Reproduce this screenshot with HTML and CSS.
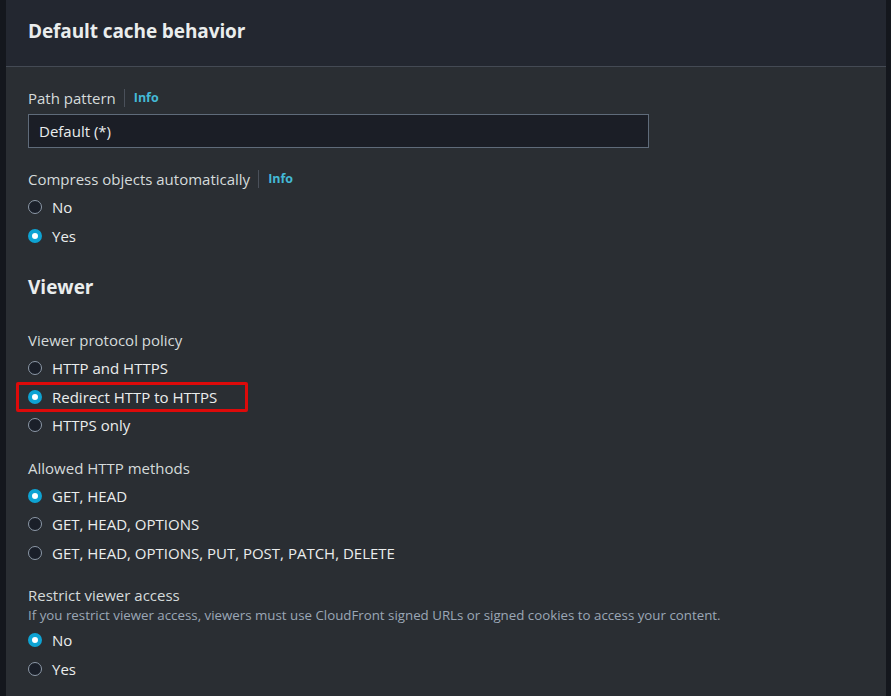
FILE: index.html
```html
<!DOCTYPE html>
<html>
<head>
<meta charset="utf-8">
<link rel="stylesheet" href="styles.css">
</head>
<body>
<div class="panel">
  <div class="panel-header"><h2>Default cache behavior</h2></div>
  <div class="panel-body">
    <div class="field field-input">
      <div class="label">Path pattern <span class="sep"></span><a class="info">Info</a></div>
      <div class="input">Default (*)</div>
    </div>
    <div class="field">
      <div class="label">Compress objects automatically <span class="sep"></span><a class="info">Info</a></div>
      <div class="radios">
        <div class="radio"><span class="dot"></span>No</div>
        <div class="radio"><span class="dot on"></span>Yes</div>
      </div>
    </div>
    <h3>Viewer</h3>
    <div class="field">
      <div class="label">Viewer protocol policy</div>
      <div class="radios">
        <div class="radio"><span class="dot"></span>HTTP and HTTPS</div>
        <div class="radio"><span class="dot on"></span>Redirect HTTP to HTTPS<span class="highlight"></span></div>
        <div class="radio"><span class="dot"></span>HTTPS only</div>
      </div>
    </div>
    <div class="field">
      <div class="label">Allowed HTTP methods</div>
      <div class="radios">
        <div class="radio"><span class="dot on"></span>GET, HEAD</div>
        <div class="radio"><span class="dot"></span>GET, HEAD, OPTIONS</div>
        <div class="radio"><span class="dot"></span>GET, HEAD, OPTIONS, PUT, POST, PATCH, DELETE</div>
      </div>
    </div>
    <div class="field">
      <div class="label">Restrict viewer access</div>
      <div class="desc">If you restrict viewer access, viewers must use CloudFront signed URLs or signed cookies to access your content.</div>
      <div class="radios radios-tight">
        <div class="radio"><span class="dot on"></span>No</div>
        <div class="radio"><span class="dot"></span>Yes</div>
      </div>
    </div>
  </div>
</div>
</body>
</html>
```
FILE: styles.css
```css
html, body { margin: 0; height: 100%; }
body {
  background: #14171d;
  padding: 0 5px 0 6px;
  box-sizing: border-box;
  font-family: "Open Sans", "Noto Sans", sans-serif;
  color: #d5dbdb;
  font-size: 15px;
  overflow: hidden;
}
.panel {
  background: #2a2e33;
  height: 100%;
}
.panel-header {
  background: #232730;
  height: 66px;
  border-bottom: 1px solid #444a54;
  padding: 0 22px;
  display: flex;
  align-items: center;
}
.panel-header h2 {
  margin: 0 0 5px;
  font-size: 19px;
  font-weight: 700;
  color: #eaeded;
  letter-spacing: -0.1px;
}
.panel-body {
  padding: 20px 22px 0;
}
.field { margin-bottom: 17px; }
.field-input { margin-bottom: 20px; }
.label {
  display: flex;
  align-items: center;
  height: 22px;
  color: #d5dbdb;
  line-height: 22px;
}
.sep {
  display: inline-block;
  width: 1px;
  height: 18px;
  background: #4a505a;
  margin: 0 9px 0 8px;
}
.info {
  color: #44b9d6;
  font-weight: 700;
  font-size: 12.5px;
}
.input {
  margin-top: 5px;
  width: 621px;
  height: 34px;
  box-sizing: border-box;
  border: 1px solid #5f6b7a;
  background: #1b1e26;
  padding: 0 10px;
  display: flex;
  align-items: center;
  color: #eaeded;
}
.radios { margin-top: 3px; }
.radios-tight { margin-top: 2px; }
.radio {
  position: relative;
  display: flex;
  align-items: center;
  height: 28.5px;
  color: #eaeded;
}
.dot {
  width: 14px;
  height: 14px;
  box-sizing: border-box;
  border-radius: 50%;
  border: 1.5px solid #8d99a8;
  background: #1a1f29;
  margin-right: 10px;
  flex: none;
}
.dot.on {
  border: 4px solid #0ea3d3;
  background: #ffffff;
}
.highlight {
  position: absolute;
  left: -12px;
  top: -1px;
  width: 226px;
  height: 24px;
  border: 3px solid #dd0a0a;
  border-radius: 2px;
}
h3 {
  margin: 25px 0 30px;
  line-height: 24px;
  font-size: 19px;
  font-weight: 700;
  color: #eaeded;
}
.desc {
  font-size: 13.3px;
  color: #9ba7b6;
  line-height: 18px;
  margin-top: 0;
}
```
